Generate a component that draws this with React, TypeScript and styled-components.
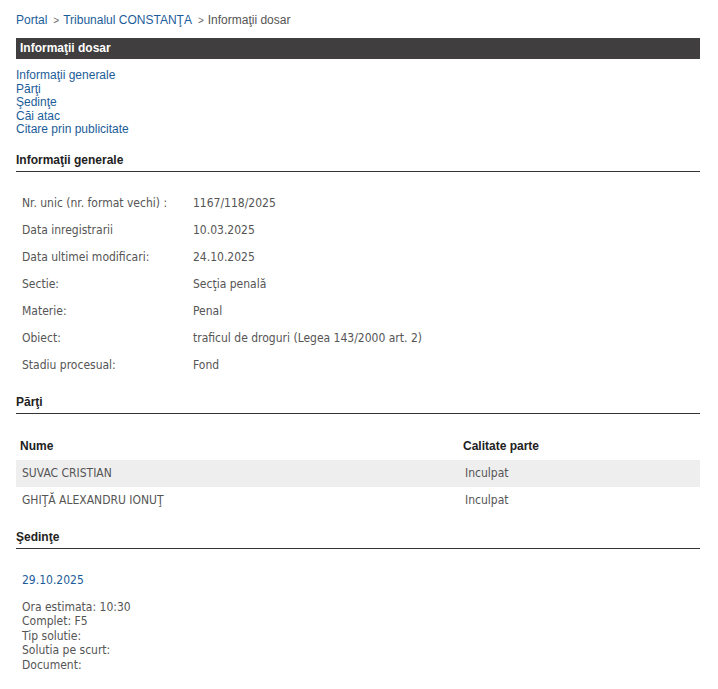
import React from "react";
import styled, { createGlobalStyle } from "styled-components";

const GlobalStyle = createGlobalStyle`
  html, body {
    margin: 0;
    padding: 0;
    background: #fff;
  }
  body {
    font-family: "Liberation Sans", Arial, sans-serif;
    font-size: 12px;
    color: #333;
  }
`;

const Page = styled.div`
  width: 684px;
  padding: 13px 0 24px 16px;
`;

const Crumbs = styled.div`
  display: flex;
  align-items: baseline;
  font-size: 12px;
  line-height: 14px;
  color: #555;
`;

const Link = styled.a`
  color: #1c5d99;
  text-decoration: none;
  cursor: pointer;
`;

const Sep = styled.span`
  font-size: 10px;
  margin: 0 4px 0 6px;
  color: #666;
`;

const TitleBar = styled.div`
  margin-top: 10px;
  height: 21px;
  background: #403e3e;
  color: #fff;
  font-weight: bold;
  font-size: 12px;
  line-height: 20px;
  padding-left: 4px;
`;

const Nav = styled.nav`
  display: flex;
  flex-direction: column;
  margin-top: 10px;
  font-size: 12px;
  line-height: 13.6px;
`;

const Section = styled.section<{ $gap: number }>`
  margin-top: ${(p) => p.$gap}px;
`;

const Heading = styled.h3`
  margin: 0;
  font-size: 12px;
  line-height: 14px;
  font-weight: bold;
  color: #222;
  padding-bottom: 4px;
  border-bottom: 1px solid #333;
`;

const Table = styled.table`
  width: 100%;
  margin-top: 18px;
  border-collapse: collapse;
  table-layout: fixed;
  font-family: "DejaVu Sans Condensed", "DejaVu Sans", Tahoma, sans-serif;
  font-size: 12px;
  color: #555;
`;

const Row = styled.tr<{ $shaded?: boolean }>`
  height: 27px;
  background: ${(p) => (p.$shaded ? "#eeeeee" : "transparent")};
`;

const Cell = styled.td<{ $w?: number }>`
  box-sizing: border-box;
  padding: 0 0 0 6px;
  vertical-align: middle;
  white-space: nowrap;
  width: ${(p) => (p.$w ? `${p.$w}px` : "auto")};
`;

const HeadCell = styled.th<{ $w?: number }>`
  box-sizing: border-box;
  height: 28px;
  padding: 0 0 0 4px;
  text-align: left;
  font-family: "Liberation Sans", Arial, sans-serif;
  font-weight: bold;
  font-size: 12px;
  color: #222;
  width: ${(p) => (p.$w ? `${p.$w}px` : "auto")};
`;

const Hearing = styled.div`
  padding: 24px 0 0 6px;
  font-family: "DejaVu Sans Condensed", "DejaVu Sans", Tahoma, sans-serif;
  font-size: 12px;
  color: #555;
`;

const HearingDate = styled(Link)`
  display: block;
  line-height: 15px;
`;

const Details = styled.div`
  margin-top: 12px;
  line-height: 14.5px;
`;

const info: [string, string][] = [
  ["Nr. unic (nr. format vechi) :", "1167/118/2025"],
  ["Data inregistrarii", "10.03.2025"],
  ["Data ultimei modificari:", "24.10.2025"],
  ["Sectie:", "Secţia penală"],
  ["Materie:", "Penal"],
  ["Obiect:", "traficul de droguri (Legea 143/2000 art. 2)"],
  ["Stadiu procesual:", "Fond"],
];

const parties: [string, string][] = [
  ["SUVAC CRISTIAN", "Inculpat"],
  ["GHIŢĂ ALEXANDRU IONUŢ", "Inculpat"],
];

const App = () => {
  return (
    <>
      <GlobalStyle />
      <Page>
        <Crumbs>
          <Link>Portal</Link>
          <Sep>&gt;</Sep>
          <Link>Tribunalul CONSTANŢA</Link>
          <Sep>&gt;</Sep>
          <span>Informaţii dosar</span>
        </Crumbs>

        <TitleBar>Informaţii dosar</TitleBar>

        <Nav>
          <Link>Informaţii generale</Link>
          <Link>Părţi</Link>
          <Link>Şedinţe</Link>
          <Link>Căi atac</Link>
          <Link>Citare prin publicitate</Link>
        </Nav>

        <Section $gap={16}>
          <Heading>Informaţii generale</Heading>
          <Table>
            <tbody>
              {info.map(([label, value], i) => (
                <Row key={label}>
                  <Cell $w={i === 0 ? 171 : undefined}>{label}</Cell>
                  <Cell>{value}</Cell>
                </Row>
              ))}
            </tbody>
          </Table>
        </Section>

        <Section $gap={16}>
          <Heading>Părţi</Heading>
          <Table>
            <thead>
              <tr>
                <HeadCell $w={443}>Nume</HeadCell>
                <HeadCell>Calitate parte</HeadCell>
              </tr>
            </thead>
            <tbody>
              {parties.map(([name, role], i) => (
                <Row key={name} $shaded={i % 2 === 0}>
                  <Cell>{name}</Cell>
                  <Cell>{role}</Cell>
                </Row>
              ))}
            </tbody>
          </Table>
        </Section>

        <Section $gap={16}>
          <Heading>Şedinţe</Heading>
          <Hearing>
            <HearingDate>29.10.2025</HearingDate>
            <Details>
              <div>Ora estimata: 10:30</div>
              <div>Complet: F5</div>
              <div>Tip solutie:</div>
              <div>Solutia pe scurt:</div>
              <div>Document:</div>
            </Details>
          </Hearing>
        </Section>
      </Page>
    </>
  );
};

export default App;
